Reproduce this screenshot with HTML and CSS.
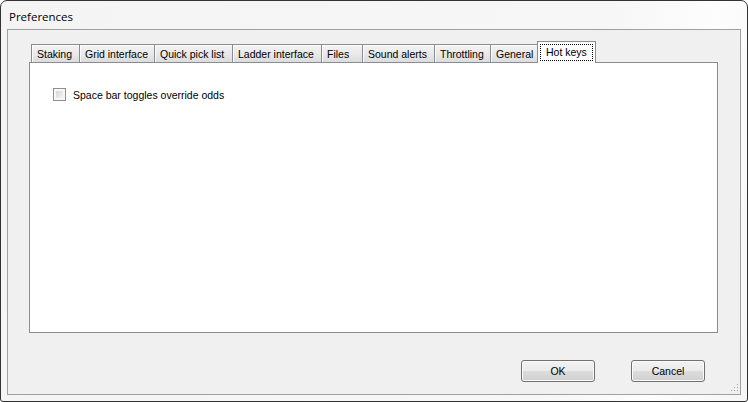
FILE: index.html
```html
<!DOCTYPE html>
<html lang="en">
<head>
  <meta charset="UTF-8">
  <title>Preferences</title>
  <link rel="stylesheet" href="styles.css">
</head>
<body>
  <div class="window">
    <div class="title-bar">Preferences</div>
    <div class="client">
      <div class="tab-control">
        <div class="tab-strip">
          <div class="tab tab-staking">Staking</div>
          <div class="tab tab-grid">Grid interface</div>
          <div class="tab tab-quick">Quick pick list</div>
          <div class="tab tab-ladder">Ladder interface</div>
          <div class="tab tab-files">Files</div>
          <div class="tab tab-sound">Sound alerts</div>
          <div class="tab tab-throttling">Throttling</div>
          <div class="tab tab-general">General</div>
          <div class="tab tab-selected"><span class="focus">Hot keys</span></div>
        </div>
        <div class="tab-page">
          <label class="check-row">
            <span class="checkbox"></span>
            <span class="check-label">Space bar toggles override odds</span>
          </label>
        </div>
      </div>
      <div class="buttons">
        <button class="btn">OK</button>
        <button class="btn">Cancel</button>
      </div>
      <!-- size grip -->
      <svg class="grip" width="8" height="8" viewBox="0 0 8 8">
        <rect x="6" y="0" width="1" height="1" fill="#a0a0a0"/>
        <rect x="3" y="3" width="1" height="1" fill="#a0a0a0"/>
        <rect x="6" y="3" width="1" height="1" fill="#a0a0a0"/>
        <rect x="0" y="6" width="1" height="1" fill="#a0a0a0"/>
        <rect x="3" y="6" width="1" height="1" fill="#a0a0a0"/>
        <rect x="6" y="6" width="1" height="1" fill="#a0a0a0"/>
      </svg>
    </div>
  </div>
</body>
</html>
```

FILE: styles.css
```css
* {
  margin: 0;
  padding: 0;
  box-sizing: border-box;
}

body {
  background-color: #fff;
  font-family: 'Liberation Sans', Arial, sans-serif;
  font-size: 10.5px;
  color: #000;
}

.window {
  width: 748px;
  height: 402px;
  border: 1px solid #333;
  border-radius: 7px 7px 3px 3px;
  background: linear-gradient(100deg, #f4f4f4 0%, #f7f7f7 75%, #fdfdfd 88%, #f6f6f6 100%);
  display: flex;
  flex-direction: column;
  padding: 0 6px 6px;
}

.title-bar {
  height: 28px;
  display: flex;
  align-items: center;
  padding-left: 2px;
  padding-top: 2px;
  font-family: 'Open Sans', 'Liberation Sans', sans-serif;
  font-size: 11.5px;
}

.client {
  position: relative;
  height: 366px;
  border: 1px solid #a0a0a0;
  background-color: #f0f0f0;
  display: flex;
  flex-direction: column;
}

.tab-control {
  margin: 11px 22px 0 21px;
}

.tab-strip {
  display: flex;
  align-items: flex-end;
  height: 21px;
  padding-left: 2px;
}

.tab {
  height: 18px;
  border: 1px solid #898c95;
  border-bottom: none;
  margin-right: -1px;
  padding: 3px 0 0 5px;
  background: linear-gradient(#f3f3f3, #eaeaea 50%, #dcdcdc);
  box-shadow: inset 1px 1px 0 #fcfcfc;
  white-space: nowrap;
}

.tab-staking { width: 49px; }
.tab-grid { width: 76px; }
.tab-quick { width: 79px; }
.tab-ladder { width: 90px; }
.tab-files { width: 42px; }
.tab-sound { width: 73px; }
.tab-throttling { width: 57px; }
.tab-general { width: 48px; }

.tab-selected {
  position: relative;
  z-index: 1;
  width: 59px;
  height: 22px;
  margin-bottom: -1px;
  padding: 3px 0 0 3px;
  background: #fff;
  box-shadow: none;
}

.focus {
  display: inline-block;
  outline: 1px dotted #000;
  padding: 1px 5px 2px 5px;
}

.tab-page {
  height: 271px;
  border: 1px solid #898c95;
  background-color: #fff;
  padding: 25px 0 0 23px;
}

.check-row {
  display: flex;
  align-items: center;
  gap: 7px;
}

.checkbox {
  width: 13px;
  height: 13px;
  border: 1px solid #8e8f8f;
  padding: 2px;
  background: linear-gradient(135deg, #d4d6da, #f4f4f4) content-box, #f7f7f7;
}

.buttons {
  display: flex;
  justify-content: flex-end;
  gap: 36px;
  margin-top: 27px;
  padding-right: 35px;
}

.btn {
  width: 74px;
  height: 22px;
  border: 1px solid #707070;
  border-radius: 3px;
  background: linear-gradient(#f2f2f2 0%, #ebebeb 50%, #dddddd 50%, #cfcfcf 100%);
  box-shadow: inset 0 0 0 1px #fbfbfb;
  font-family: 'Liberation Sans', Arial, sans-serif;
  font-size: 10.5px;
  color: #000;
}

.grip {
  position: absolute;
  right: 1px;
  bottom: 2px;
}
```
